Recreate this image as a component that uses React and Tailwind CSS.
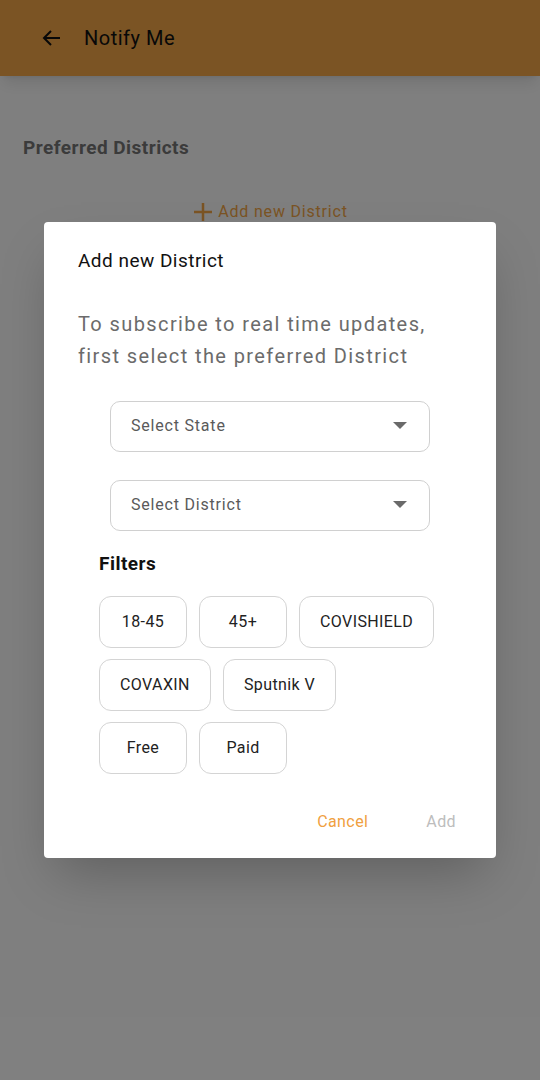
import { useState } from "react";

const font = { fontFamily: '"Roboto", "Liberation Sans", sans-serif' };

function Chip({ label }) {
  return (
    <button className="h-[52px] min-w-[88px] px-[20px] rounded-[12px] border border-[#d4d4d4] bg-white text-[16px] tracking-wide text-[#222]">
      {label}
    </button>
  );
}

function SelectBox({ placeholder }) {
  return (
    <div className="h-[51px] w-[320px] rounded-[10px] border border-[#d0d0d0] flex items-center justify-between pl-[20px] pr-[22px]">
      <span className="text-[16px] tracking-wider text-[#5a5a5a]">{placeholder}</span>
      <svg width="14" height="8" viewBox="0 0 14 8">
        <path d="M0 0 L14 0 L7 7 Z" fill="#6a6a6a" />
      </svg>
    </div>
  );
}

export default function App() {
  const [filters] = useState([
    ["18-45", "45+", "COVISHIELD"],
    ["COVAXIN", "Sputnik V"],
    ["Free", "Paid"],
  ]);

  return (
    <div style={font} className="relative w-[540px] h-[1080px] bg-white overflow-hidden">
      <div className="h-[76px] bg-[#f6a848] flex items-center px-[40px] gap-[20px] shadow-lg">
        <svg width="24" height="24" viewBox="0 0 24 24" fill="none" stroke="#111" strokeWidth="2">
          <path d="M20 12H4M11 5l-7 7 7 7" />
        </svg>
        <span className="text-[20px] tracking-wide text-[#111]">Notify Me</span>
      </div>
      <div className="px-[23px] pt-[58px]">
        <h2 className="text-[19px] font-bold tracking-wide text-[#777]">Preferred Districts</h2>
        <div className="mt-[37px] flex items-center justify-center gap-[4px] text-[#f6a848]">
          <svg width="22" height="22" viewBox="0 0 22 22" stroke="#f6a848" strokeWidth="2.5">
            <path d="M11 2v18M2 11h18" />
          </svg>
          <span className="text-[16px] tracking-wider">Add new District</span>
        </div>
      </div>

      <div className="absolute inset-0 bg-black/50 flex items-center justify-center">
        <div className="w-[452px] h-[636px] bg-white rounded-[4px] shadow-2xl flex flex-col">
          <div className="px-[34px] pt-[25px]">
            <h3 className="text-[19px] tracking-wide text-[#111]">Add new District</h3>
            <p className="mt-[32px] text-[20px] leading-[32px] tracking-[0.07em] text-[#6b6b6b]">
              To subscribe to real time updates,
              <br />
              first select the preferred District
            </p>
          </div>
          <div className="mt-[29px] flex flex-col items-center gap-[28px]">
            <SelectBox placeholder="Select State" />
            <SelectBox placeholder="Select District" />
          </div>
          <div className="px-[55px] mt-[19px]">
            <h4 className="text-[19px] font-bold tracking-wide text-[#111]">Filters</h4>
            <div className="mt-[18px] flex flex-col gap-[11px]">
              {filters.map((row, i) => (
                <div key={i} className="flex gap-[12px]">
                  {row.map((f) => (
                    <Chip key={f} label={f} />
                  ))}
                </div>
              ))}
            </div>
          </div>
          <div className="mt-auto mb-[24px] flex justify-end items-center gap-[58px] pr-[40px]">
            <button className="text-[16px] tracking-wide text-[#f0a040]">Cancel</button>
            <button className="text-[16px] tracking-wide text-[#bdbdbd]">Add</button>
          </div>
        </div>
      </div>
    </div>
  );
}
